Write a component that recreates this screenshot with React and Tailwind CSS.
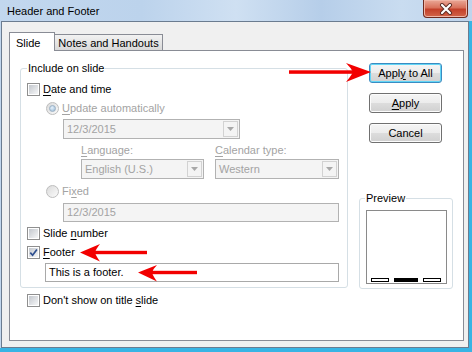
import React from 'react'

const Check = ({ checked }) => (
  <span className="flex h-[13px] w-[13px] shrink-0 border border-[#8f8f8f] bg-white p-[1px]">
    <span className="flex flex-1 items-center justify-center bg-[linear-gradient(135deg,#c3c7cd,#f6f7f8)]">
      {checked && (
        <svg width="9" height="9" viewBox="0 0 9 9">
          <path d="M1.3 4.6 L3.6 7.2 L7.9 1.4" fill="none" stroke="#2e4f8f" strokeWidth="1.7" />
        </svg>
      )}
    </span>
  </span>
)

const Radio = ({ checked }) => (
  <span className="flex h-[13px] w-[13px] shrink-0 items-center justify-center rounded-full border border-[#bdbdbd] bg-[linear-gradient(135deg,#dadada,#fbfbfb)]">
    {checked && <span className="h-[7px] w-[7px] rounded-full border border-[#9ab0c4] bg-[radial-gradient(circle_at_40%_35%,#e8f2fb,#93b6d4)]" />}
  </span>
)

const Row = ({ className = '', children }) => (
  <div className={`flex h-[16px] items-center gap-[3px] ${className}`}>{children}</div>
)

const DropArrow = () => (
  <span className="mr-[1px] flex h-[16px] w-[15px] items-center justify-center border border-[#d2d2d2] bg-[#f4f4f4]">
    <svg width="7" height="4" viewBox="0 0 7 4">
      <path d="M0 0 H7 L3.5 4 Z" fill="#a8a8a8" />
    </svg>
  </span>
)

const Btn = ({ children, focus }) => (
  <div
    className={`flex h-[20px] w-[73px] items-center justify-center rounded-[3px] border bg-[linear-gradient(#f5f5f5_0%,#ececec_50%,#dddddd_51%,#d0d0d0_100%)] ${
      focus ? 'border-[#3a8cc2] shadow-[inset_0_0_0_1px_#63d6f6]' : 'border-[#707070] shadow-[inset_0_0_0_1px_#fcfcfc]'
    }`}
  >
    {children}
  </div>
)

const U = ({ children }) => <span className="underline underline-offset-[2px]">{children}</span>

export default function App() {
  return (
    <div className="relative flex h-[352px] w-[472px] flex-col overflow-hidden bg-[linear-gradient(90deg,#c2d7ee_0%,#bcd3ec_30%,#cfe0f2_50%,#b6cee9_68%,#c9dcf0_85%,#bed4ec_100%)] font-['Liberation_Sans',Arial,sans-serif] text-[11px] text-black">
      {/* title bar */}
      <div className="flex h-[21px] shrink-0 items-start">
        <div className="pl-[7px] pt-[5px] leading-[13px]">Header and Footer</div>
        <div className="ml-auto mr-[4px] flex h-[18px] w-[45px] items-center justify-center rounded-b-[4px] border border-t-0 border-[#6e2a1f] bg-[linear-gradient(#eaa897_0%,#d9725c_45%,#c3402a_55%,#d2654a_100%)] shadow-[inset_0_0_0_1px_#f0b5a6]">
          <svg width="14" height="12" viewBox="0 0 14 12">
            <path d="M3 2 L11 10 M11 2 L3 10" stroke="#5b2a22" strokeWidth="4" strokeLinecap="round" />
            <path d="M3 2 L11 10 M11 2 L3 10" stroke="#ffffff" strokeWidth="2.2" strokeLinecap="round" />
          </svg>
        </div>
      </div>

      {/* frame */}
      <div className="flex min-h-0 flex-1 flex-col border-b-[4px] border-r-[3px] border-[#39b4e4] pl-[1px]">
        <div className="flex min-h-0 flex-1 flex-col border border-[#6b7c90] bg-[#f0f0f0] pb-[6px] pl-[7px] pr-[4px] pt-[10px]">
          {/* tabs */}
          <div className="flex h-[18px] items-end">
            <div className="relative z-10 -mb-px h-[19px] w-[46px] border border-b-0 border-[#898c95] bg-white pl-[6px] pt-[3px] leading-[14px]">
              Slide
            </div>
            <div className="h-[16px] w-[108px] border-r border-t border-[#898c95] bg-[linear-gradient(#f2f2f2,#d9d9d9)] pt-[1px] text-center leading-[14px]">
              Notes and Handouts
            </div>
          </div>

          {/* panel */}
          <div className="flex min-h-0 flex-1 border border-[#898c95] bg-white pl-[10px]">
            {/* left column */}
            <div className="flex w-[328px] flex-col">
              <fieldset className="mt-[10px] rounded-[3px] border border-[#d5dfe5] pb-[5px] pl-[6px]">
                <legend className="px-[1px] leading-[14px]">Include on slide</legend>
                <Row className="mt-[6px]">
                  <Check />
                  <span>
                    <U>D</U>ate and time
                  </span>
                </Row>
                <Row className="ml-[19px] mt-[3px] text-[#a3a3a3]">
                  <Radio checked />
                  <span>
                    <U>U</U>pdate automatically
                  </span>
                </Row>
                <div className="ml-[36px] mt-[3px] flex h-[20px] w-[177px] items-center border border-[#b2b2b2] bg-[#f4f4f4] pl-[3px] text-[#a3a3a3]">
                  <span className="flex-1">12/3/2015</span>
                  <DropArrow />
                </div>
                <div className="ml-[54px] mt-[4px] flex h-[14px] items-center leading-[14px] text-[#a3a3a3]">
                  <span className="w-[134px]">
                    <U>L</U>anguage:
                  </span>
                  <span>
                    <U>C</U>alendar type:
                  </span>
                </div>
                <div className="ml-[54px] mt-[2px] flex gap-[11px] text-[#a3a3a3]">
                  <div className="flex h-[20px] w-[123px] items-center border border-[#b2b2b2] bg-[#f4f4f4] pl-[3px]">
                    <span className="flex-1">English (U.S.)</span>
                    <DropArrow />
                  </div>
                  <div className="flex h-[20px] w-[124px] items-center border border-[#b2b2b2] bg-[#f4f4f4] pl-[3px]">
                    <span className="flex-1">Western</span>
                    <DropArrow />
                  </div>
                </div>
                <Row className="ml-[19px] mt-[4px] text-[#a3a3a3]">
                  <Radio />
                  <span>
                    Fi<U>x</U>ed
                  </span>
                </Row>
                <div className="ml-[36px] mt-[4px] flex h-[19px] w-[276px] items-center border border-[#b2b2b2] bg-[#f4f4f4] pl-[3px] text-[#a3a3a3]">
                  12/3/2015
                </div>
                <Row className="mt-[3px]">
                  <Check />
                  <span>
                    Slide <U>n</U>umber
                  </span>
                </Row>
                <Row className="mt-[3px]">
                  <Check checked />
                  <span>
                    <U>F</U>ooter
                  </span>
                </Row>
                <div className="ml-[18px] mt-[3px] flex h-[19px] w-[294px] items-center border border-[#a9a9a9] bg-white pl-[3px]">
                  This is a footer.
                </div>
              </fieldset>
              <Row className="ml-[7px] mt-[4px]">
                <Check />
                <span>
                  Don't show on title <U>s</U>lide
                </span>
              </Row>
            </div>

            {/* right column */}
            <div className="ml-[11px] flex w-[94px] flex-col">
              <div className="ml-[10px] mt-[12px] flex flex-col gap-[10px]">
                <Btn focus>
                  Appl<U>y</U>&nbsp;to All
                </Btn>
                <Btn>
                  <U>A</U>pply
                </Btn>
                <Btn>Cancel</Btn>
              </div>
              <fieldset className="mt-[48px] rounded-[3px] border border-[#d5dfe5] pb-[4px] pl-[5px]">
                <legend className="px-[1px] leading-[14px]">Preview</legend>
                <div className="ml-[1px] mt-[5px] flex h-[74px] w-[81px] items-end gap-[5px] border border-[#8a8a8a] bg-white pb-[1px] pl-[4px]">
                  <span className="h-[4px] w-[18px] border border-black bg-white" />
                  <span className="h-[4px] w-[24px] bg-black" />
                  <span className="h-[4px] w-[18px] border border-black bg-white" />
                </div>
              </fieldset>
            </div>
          </div>
        </div>
      </div>

      {/* red callout arrows */}
      <svg className="pointer-events-none absolute left-0 top-0" width="472" height="352" viewBox="0 0 472 352">
        <g fill="#f20000">
          <rect x="289" y="70.3" width="64" height="3.5" />
          <path d="M371 72 L346 63 Q351 68 353 72 Q351 76 346 82 Z" />
          <rect x="95" y="250.8" width="52" height="3.4" />
          <path d="M80 252.5 L100 244 Q96 249 95 252.5 Q96 256 100 261.5 Z" />
          <rect x="152" y="270.8" width="45" height="3.4" />
          <path d="M138 272.5 L157 265 Q153 269 152 272.5 Q153 276 157 281.5 Z" />
        </g>
      </svg>
    </div>
  )
}
